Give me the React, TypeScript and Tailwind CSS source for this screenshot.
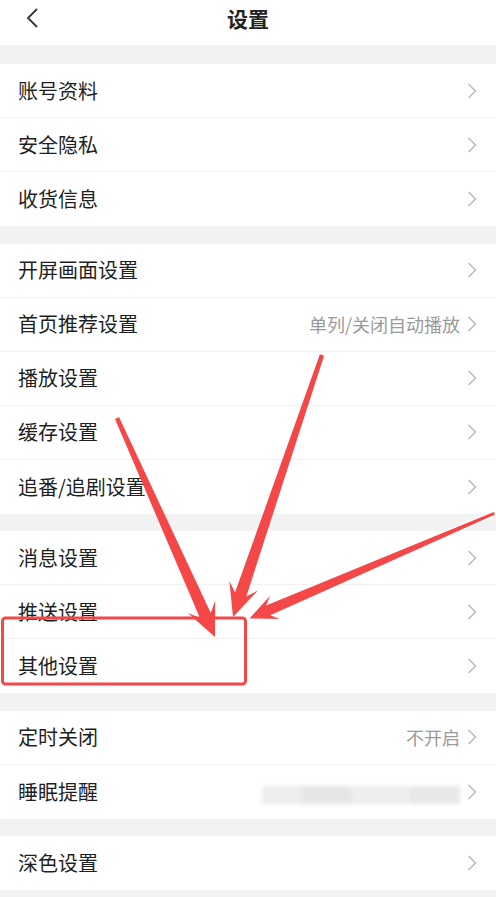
import React from "react";

type Row = { label: string; value?: string; blurred?: boolean };

const groups: Row[][] = [
  [{ label: "账号资料" }, { label: "安全隐私" }, { label: "收货信息" }],
  [
    { label: "开屏画面设置" },
    { label: "首页推荐设置", value: "单列/关闭自动播放" },
    { label: "播放设置" },
    { label: "缓存设置" },
    { label: "追番/追剧设置" },
  ],
  [{ label: "消息设置" }, { label: "推送设置" }, { label: "其他设置" }],
  [{ label: "定时关闭", value: "不开启" }, { label: "睡眠提醒", blurred: true }],
  [{ label: "深色设置" }],
];

const font = { fontFamily: '"Noto Sans CJK SC", "Noto Sans", sans-serif' };

function Chevron() {
  return (
    <svg width="10" height="16" viewBox="0 0 10 16" className="shrink-0">
      <polyline points="1.5,1 8.5,8 1.5,15" fill="none" stroke="#b8b8b8" strokeWidth="1.4" />
    </svg>
  );
}

function SettingRow({ row, last }: { row: Row; last: boolean }) {
  return (
    <div className={`flex h-[54px] items-center justify-between pl-[18px] pr-[19px] ${last ? "" : "border-b border-[#f1f1f1]"}`}>
      <span className="text-[20px] leading-none text-[#1f1f1f]">{row.label}</span>
      <div className="flex items-center gap-[7px]">
        {row.value ? <span className="text-[18px] leading-none text-[#9a9a9a]">{row.value}</span> : null}
        {row.blurred ? (
          <div className="flex h-[18px] w-[198px] translate-y-[3px] blur-[2px]">
            <div className="h-full w-[40px] bg-[#ededed]" />
            <div className="h-full w-[50px] bg-[#e6e6e6]" />
            <div className="h-full w-[58px] bg-[#eeeeee]" />
            <div className="h-full w-[50px] bg-[#e8e8e8]" />
          </div>
        ) : null}
        <Chevron />
      </div>
    </div>
  );
}

function arrow(tx: number, ty: number, px: number, py: number) {
  const len = Math.hypot(px - tx, py - ty);
  const dx = (px - tx) / len;
  const dy = (py - ty) / len;
  const nx = -dy;
  const ny = dx;
  const L = 33;
  const pt = (along: number, side: number) =>
    `${(px - dx * along + nx * side).toFixed(1)},${(py - dy * along + ny * side).toFixed(1)}`;
  const tail = (side: number) => `${(tx + nx * side).toFixed(1)},${(ty + ny * side).toFixed(1)}`;
  return [tail(2.2), pt(L * 0.72, 6), pt(L, 15), `${px},${py}`, pt(L, -15), pt(L * 0.72, -6), tail(-2.2)].join(" ");
}

export default function App() {
  return (
    <div className="relative min-h-[897px] w-[496px] overflow-hidden bg-[#f2f2f2]" style={font}>
      <header className="flex h-[45px] items-start bg-white">
        <div className="relative flex h-9 w-full items-center justify-center">
          <svg width="14" height="20" viewBox="0 0 14 20" className="absolute left-[25px]">
            <polyline points="12,1 3,10 12,19" fill="none" stroke="#333" strokeWidth="1.8" />
          </svg>
          <span className="text-[21px] font-bold leading-none text-[#222]">设置</span>
        </div>
      </header>

      <div className="flex flex-col gap-[17.5px] pt-[19px]">
        {groups.map((g, i) => (
          <section key={i} className="bg-white">
            {g.map((row, j) => (
              <SettingRow key={row.label} row={row} last={j === g.length - 1} />
            ))}
          </section>
        ))}
      </div>

      <svg className="pointer-events-none absolute inset-0" width="496" height="897" viewBox="0 0 496 897">
        <rect x="2.5" y="618" width="243" height="66" rx="3" fill="none" stroke="#f24848" strokeWidth="3" />
        <polygon points={arrow(117, 418, 215, 637)} fill="#f44848" />
        <polygon points={arrow(322, 355, 233, 617)} fill="#f44848" />
        <polygon points={arrow(495, 513, 248, 619)} fill="#f44848" stroke="#fff" strokeWidth="1.5" />
      </svg>
    </div>
  );
}
